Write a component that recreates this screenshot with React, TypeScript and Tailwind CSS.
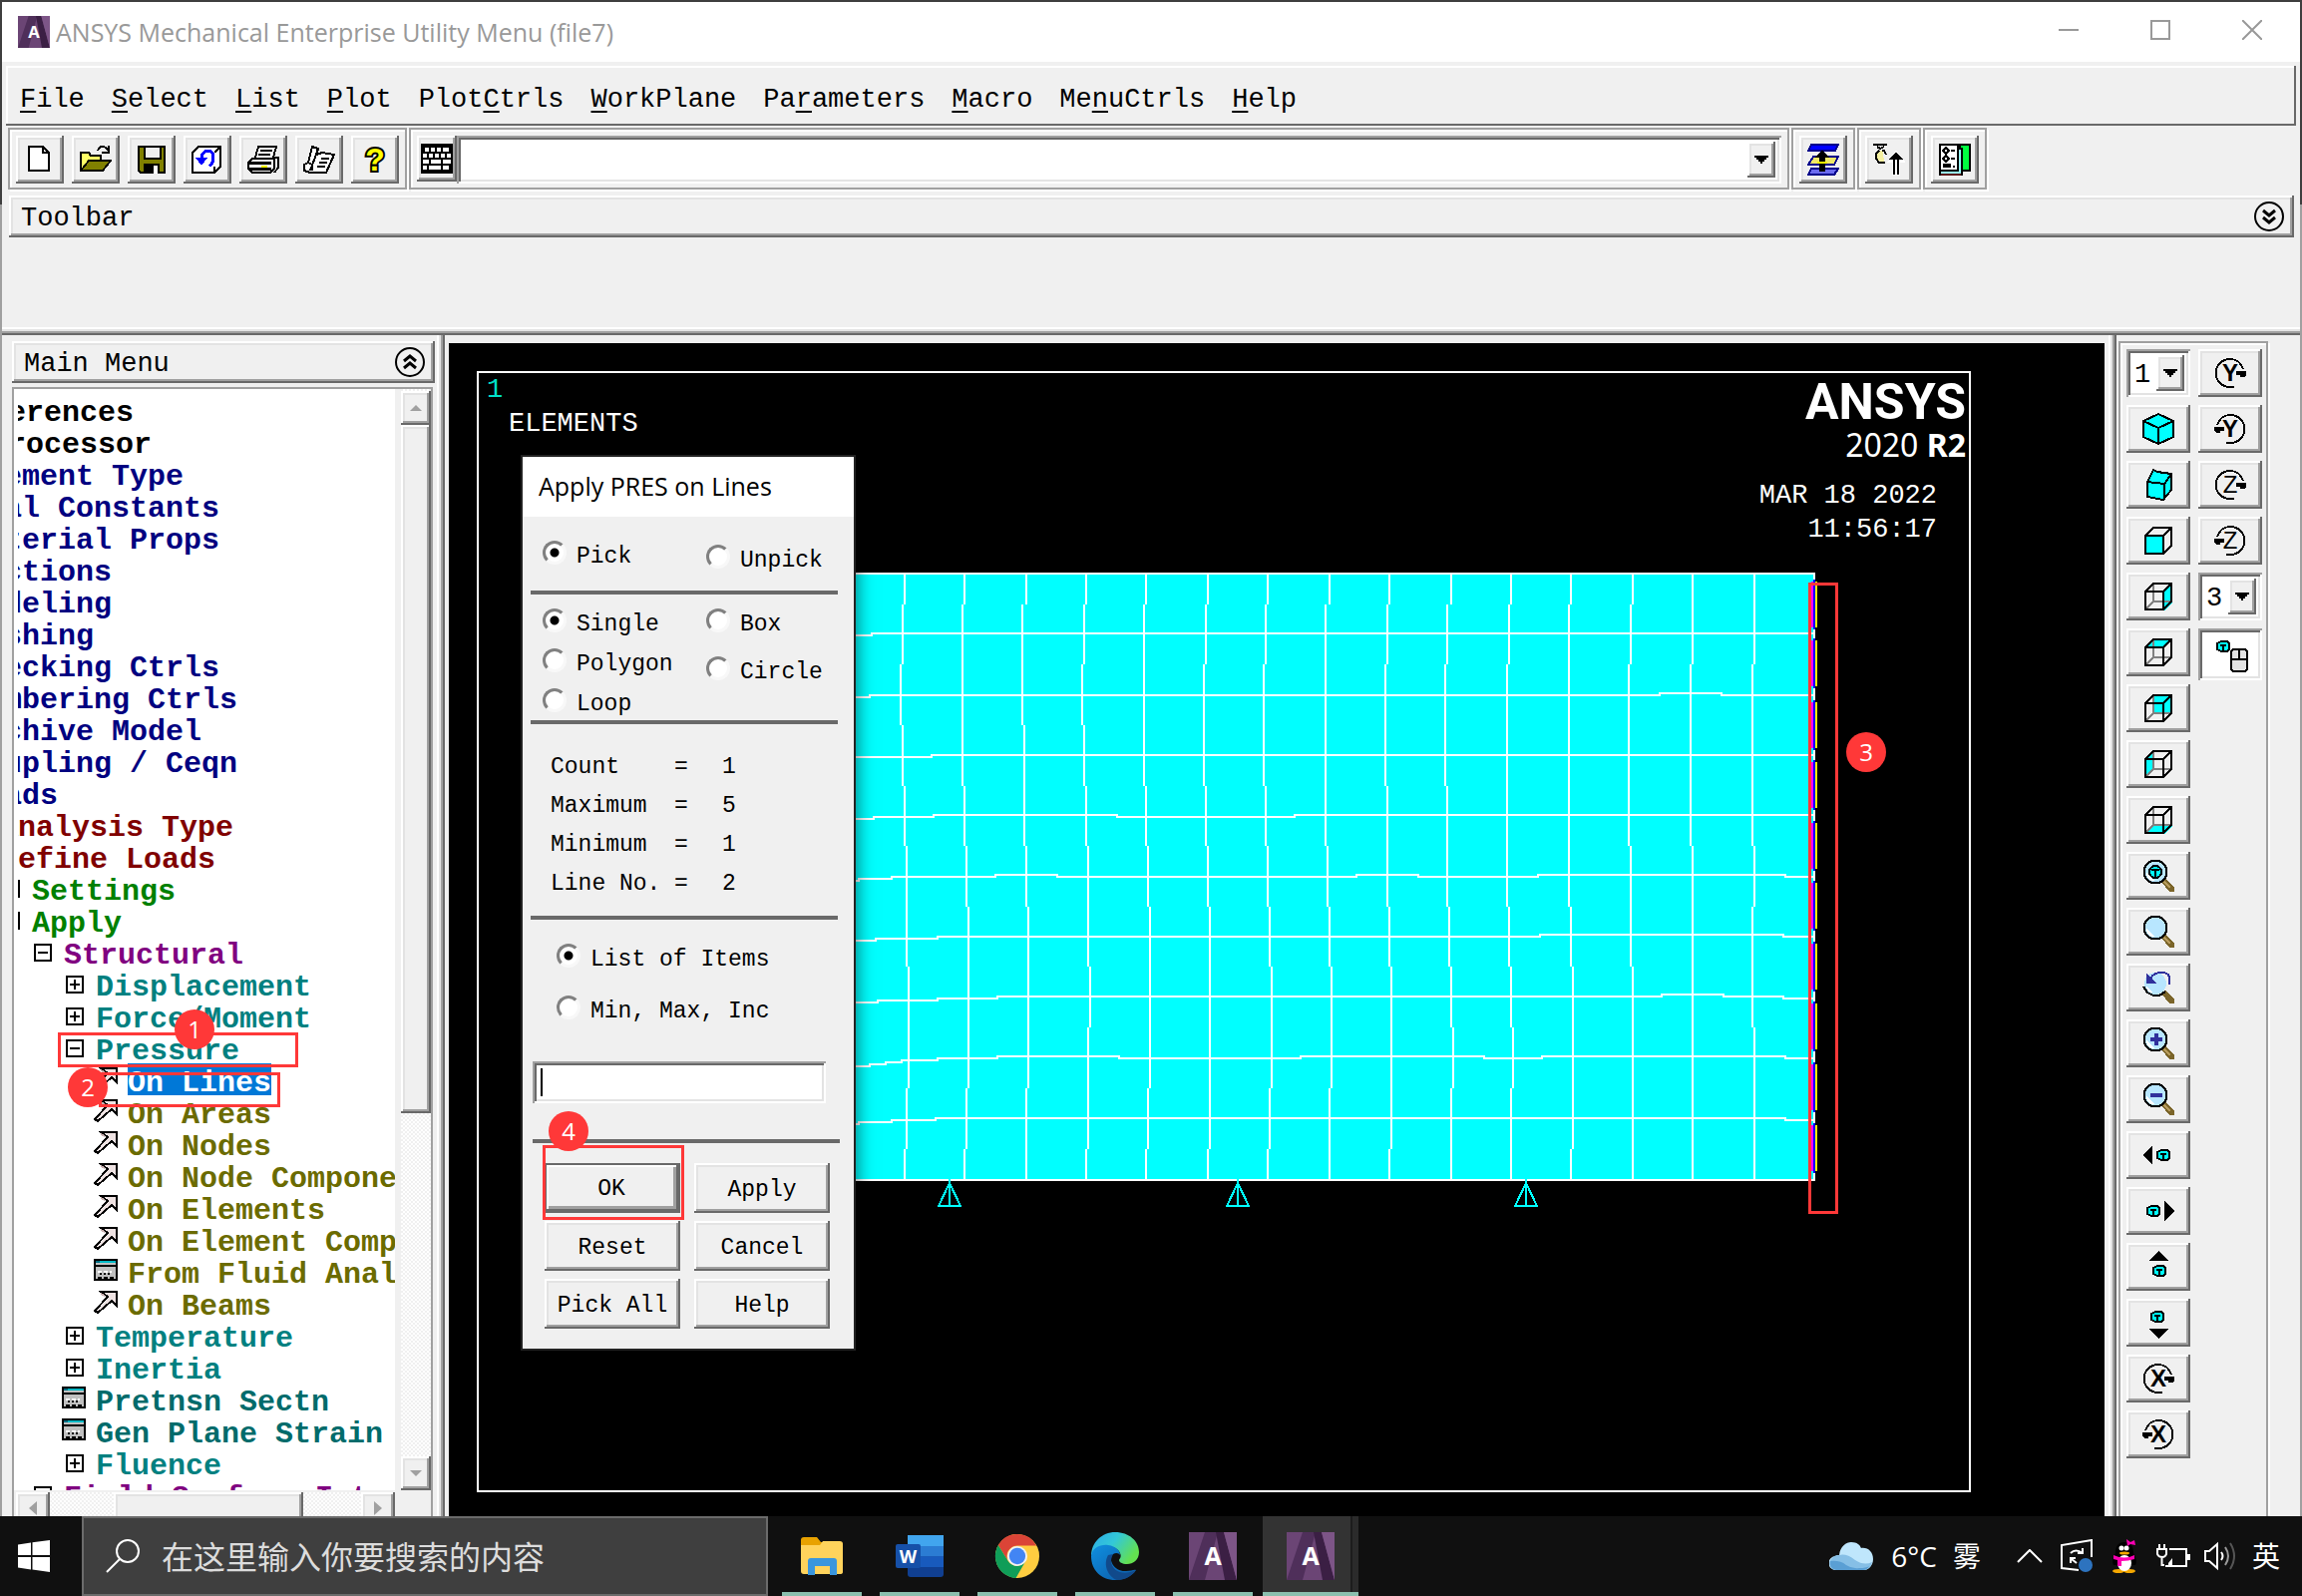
import type { ReactNode } from "react";

const RAISED =
  "bg-[#f0f0f0] shadow-[inset_-2px_-2px_0_#696969,inset_2px_2px_0_#fff,inset_-4px_-4px_0_#a0a0a0,inset_4px_4px_0_#e3e3e3]";
const SUNKEN =
  "bg-white shadow-[inset_2px_2px_0_#a0a0a0,inset_-2px_-2px_0_#fff,inset_4px_4px_0_#696969,inset_-4px_-4px_0_#e3e3e3]";
const GROUP =
  "border-2 border-[#a0a0a0] shadow-[inset_2px_2px_0_#fff,2px_2px_0_#fff] p-[6px] pb-1";
const MONO = "font-['Liberation_Mono',monospace]";
const SANS = "font-['Open_Sans','Noto_Sans_CJK_SC',sans-serif]";

/* ---------- shared pieces ---------- */

function Icon({ children, size = 16 }: { children: ReactNode; size?: number }) {
  return (
    <svg
      width={size * 2}
      height={size * 2}
      viewBox={`0 0 ${size} ${size}`}
      fill="none"
      stroke="#000"
      shapeRendering="crispEdges"
      aria-hidden="true"
    >
      {children}
    </svg>
  );
}

function ToolButton({ label, children }: { label: string; children: ReactNode }) {
  return (
    <button
      type="button"
      aria-label={label}
      className={`flex h-12 w-12 shrink-0 items-center justify-center ${RAISED}`}
    >
      {children}
    </button>
  );
}

function Arrow() {
  return (
    <svg width="14" height="8" viewBox="0 0 7 4" shapeRendering="crispEdges" aria-hidden="true">
      <path d="M0 0h7v1h-1v1h-1v1h-1v1h-1v-1h-1v-1h-1v-1h-1z" fill="#000" />
    </svg>
  );
}

function SplitterV() {
  return (
    <div className="flex w-2 shrink-0">
      <div className="w-0.5 bg-white" />
      <div className="w-0.5 bg-[#e3e3e3]" />
      <div className="w-0.5 bg-[#a0a0a0]" />
      <div className="w-0.5 bg-[#696969]" />
    </div>
  );
}

function SplitterH() {
  return (
    <div className="shrink-0">
      <div className="h-0.5 bg-white" />
      <div className="h-0.5 bg-[#e3e3e3]" />
      <div className="h-0.5 bg-[#a0a0a0]" />
      <div className="h-0.5 bg-[#696969]" />
    </div>
  );
}

function Chevrons({ up = false }: { up?: boolean }) {
  return (
    <svg width="30" height="30" viewBox="0 0 30 30" fill="none" stroke="#000" strokeWidth="2" aria-hidden="true">
      <circle cx="15" cy="15" r="14" />
      {up ? (
        <path d="M9 14l6-5 6 5M9 21l6-5 6 5" strokeWidth="3" />
      ) : (
        <path d="M9 9l6 5 6-5M9 16l6 5 6-5" strokeWidth="3" />
      )}
    </svg>
  );
}

function Badge({ n, className }: { n: number; className: string }) {
  return (
    <span
      className={`absolute flex h-10 w-10 items-center justify-center rounded-full bg-[#ff3838] text-2xl leading-6 text-white ${SANS} ${className}`}
    >
      {n}
    </span>
  );
}

function Outline({ className }: { className: string }) {
  return <span className={`absolute border-[3px] border-[#ff3838] ${className}`} />;
}

function AnsysLogo({ size }: { size: number }) {
  return (
    <svg width={size} height={size} viewBox="0 0 48 48" aria-hidden="true">
      <rect width="48" height="48" fill="#6b4575" />
      <path d="M0 48L16 0h13L16 48z" fill="#4f2f5a" />
      <path d="M27 0h8l13 48H36z" fill="#3b1f44" />
      <path d="M35 0h13v48z" fill="#7d5587" />
      <text
        x="24"
        y="33"
        textAnchor="middle"
        fontFamily="Open Sans"
        fontWeight="700"
        fontSize="25"
        fill="#fff"
      >
        A
      </text>
    </svg>
  );
}

/* ---------- title, menu, toolbars ---------- */

const menus = [
  ["", "F", "ile"],
  ["", "S", "elect"],
  ["", "L", "ist"],
  ["", "P", "lot"],
  ["Plot", "C", "trls"],
  ["", "W", "orkPlane"],
  ["Pa", "r", "ameters"],
  ["", "M", "acro"],
  ["Me", "n", "uCtrls"],
  ["", "H", "elp"],
];

const WINDOW_BUTTON = "flex h-[56px] w-[92px] items-center justify-center";

function TitleBar() {
  return (
    <header className="flex h-[60px] shrink-0 items-center bg-white pl-4">
      <div className="mr-1.5 flex">
        <AnsysLogo size={32} />
      </div>
      <h1 className={`text-[25px] leading-8 text-[#999] ${SANS}`}>
        ANSYS Mechanical Enterprise Utility Menu (file7)
      </h1>
      <div className="ml-auto mr-0.5 flex self-start">
        <button type="button" aria-label="Minimize" className={WINDOW_BUTTON}>
          <svg width="20" height="20" viewBox="0 0 20 20" stroke="#999" strokeWidth="2">
            <path d="M0 10h20" />
          </svg>
        </button>
        <button type="button" aria-label="Maximize" className={WINDOW_BUTTON}>
          <svg width="20" height="20" viewBox="0 0 20 20" fill="none" stroke="#999" strokeWidth="2">
            <rect x="1" y="1" width="18" height="18" />
          </svg>
        </button>
        <button type="button" aria-label="Close" className={WINDOW_BUTTON}>
          <svg width="20" height="20" viewBox="0 0 20 20" fill="none" stroke="#999" strokeWidth="2">
            <path d="M0 0l20 20M20 0L0 20" />
          </svg>
        </button>
      </div>
    </header>
  );
}

function MenuBar() {
  return (
    <nav
      className={`mx-1 mt-1 flex h-[60px] shrink-0 items-center gap-[27px] pl-3.5 pt-2 text-[27px] leading-8 shadow-[inset_-2px_-2px_0_#696969,inset_2px_2px_0_#fff] ${MONO}`}
    >
      {menus.map(([before, key, after]) => (
        <button type="button" key={before + key + after}>
          {before}
          <span className="underline decoration-2 underline-offset-4">{key}</span>
          {after}
        </button>
      ))}
    </nav>
  );
}

function StandardToolbar() {
  return (
    <div className="ml-1.5 mt-0.5 flex shrink-0 gap-0.5">
      <div className={`flex gap-2 ${GROUP}`}>
        <ToolButton label="New">
          <Icon>
            <path d="M2.5 1.5h7l3 3v9h-10z" fill="#fff" />
            <path d="M9.5 1.5v3h3" />
          </Icon>
        </ToolButton>
        <ToolButton label="Open">
          <Icon>
            <path d="M.5 13.5v-9h4l1 1.500h5v3" fill="#ffff66" />
            <path d="M.5 13.500l4-5h11l-4 5z" fill="#808000" />
            <path d="M9 3.500c1-3 4-2.500 5 0M14.500 1v3.500H11" />
          </Icon>
        </ToolButton>
        <ToolButton label="Save">
          <Icon>
            <path d="M1.500 1.500h13v13h-12l-1-1z" fill="#808000" />
            <rect x="4.500" y="1.500" width="8" height="6" fill="#f0f0f0" />
            <path d="M4 10h8v5H4z" fill="#000" stroke="none" />
            <path d="M9 11h2v4H9z" fill="#fff" stroke="none" />
          </Icon>
        </ToolButton>
        <ToolButton label="Resume">
          <Icon>
            <path d="M.5 4.500l3-3h11v10l-3 3H.5z" fill="#fff" />
            <path d="M11.500 14.500v-3M11.500 4.500l3-3" />
            <path d="M5 7.500c0-5 6-5 6-1 0 3-1 4-2 5" stroke="#00f" strokeWidth="1.500" />
            <path d="M2 7h6l-3 4z" fill="#00f" stroke="none" />
          </Icon>
        </ToolButton>
        <ToolButton label="Print">
          <Icon>
            <path d="M3.500 8.500l2-7h9l-2 7" fill="#fff" />
            <path d="M6.500 3.500h6M5.500 5.500h6M13 7h2.500v5l-2 2.500" />
            <path d="M.5 9.500l2-2h11v5l-2 2h-9l-2-2z" fill="#f0f0f0" />
            <path d="M.5 9.500h11.500M1 12.500h11" strokeWidth="1.500" />
            <path d="M7 11h3v1H7z" fill="#ff0" stroke="none" />
          </Icon>
        </ToolButton>
        <ToolButton label="Report">
          <Icon>
            <path d="M4.500 1.500l3 1-1 3 3-1 6 1-4 9h-8l-3-1v-3l2-1z" fill="#fff" />
            <path d="M6.500 5.500l-3 8M9 7.500h4M8 9.500h4M7 11.500h4M2.500 9.500l2 1v3" />
          </Icon>
        </ToolButton>
        <ToolButton label="Help">
          <svg width="32" height="32" viewBox="0 0 32 32" aria-hidden="true">
            <text
              x="16"
              y="27"
              textAnchor="middle"
              fontFamily="Liberation Sans"
              fontWeight="700"
              fontSize="32"
              fill="#ff0"
              stroke="#000"
              strokeWidth="4"
              paintOrder="stroke"
            >
              ?
            </text>
          </svg>
        </ToolButton>
      </div>

      <div className={`flex w-[1384px] ${GROUP}`}>
        <button
          type="button"
          aria-label="Command window"
          className={`flex h-[46px] w-10 shrink-0 items-center justify-center ${RAISED}`}
        >
          <svg width="32" height="30" viewBox="0 0 16 15" shapeRendering="crispEdges" aria-hidden="true">
            <path d="M0 0h16v15H0z" fill="#000" />
            <path
              d="M2 2h2v2H2zM5 2h2v2H5zM8 2h2v2H8zM11 2h3v2h-3zM1 5h2v2H1zM4 5h2v2H4zM7 5h2v2H7zM10 5h2v2h-2zM13 5h2v2h-2zM1 8h3v2H1zM5 8h5v2H5zM11 8h4v2h-4zM1 11h2v2H1zM4 11h6v2H4zM11 11h3v2h-3z"
              fill="#fff"
            />
          </svg>
        </button>
        <div className={`flex h-12 flex-1 items-center p-[6px] ${SUNKEN}`}>
          <input
            type="text"
            aria-label="Command"
            className={`h-full min-w-0 flex-1 text-[27px] outline-none ${MONO}`}
          />
          <button
            type="button"
            aria-label="Command history"
            className={`flex h-9 w-7 items-center justify-center ${RAISED}`}
          >
            <Arrow />
          </button>
        </div>
      </div>

      <div className={GROUP}>
        <ToolButton label="Raise hidden">
          <Icon>
            <path d="M2 .5h13.500l-1.500 3H.5z" fill="#00f" stroke="#00008b" />
            <path d="M3 6.500h12.500l-2 4H.5z" fill="#f0e868" stroke="#00008b" />
            <path d="M2 12.500h13.500l-2 3H.5z" fill="#6b6bf0" stroke="#00008b" />
            <path d="M7.500 3l3.500 4H9v7H6V7H4z" fill="#000" stroke="none" />
            <path d="M5 9.500h5" stroke="#ff0" />
          </Icon>
        </ToolButton>
      </div>
      <div className={GROUP}>
        <ToolButton label="Reset picking">
          <Icon>
            <path d="M2.500 3c-3 2-1 6 3 6.500L5 4z" fill="#f5f0a0" stroke="none" />
            <path d="M0 .5h7M2 1.500l1.500 1 2-1" />
            <path d="M3 3.500L1.500 5v2.500l1.500 2h3M4.500 3.500h1l1 2" />
            <path d="M11.500 4l4 5h-2.500v7h-3V9H8z" fill="#fff" stroke="#fff" />
            <path d="M11.500 4l3.500 4H8z" fill="#000" stroke="none" />
            <path d="M10.500 8v7.500M12.500 8v7.500" />
          </Icon>
        </ToolButton>
      </div>
      <div className={GROUP}>
        <ToolButton label="Contact manager">
          <Icon>
            <rect x="10.500" y=".5" width="5" height="13" fill="#00ff40" />
            <path d="M9.500 2.500h2v13H.5v-3" fill="#99ffff" />
            <rect x=".5" y=".5" width="9" height="13" fill="#fff" />
            <path d="M3.500 2l1.500 1.500L3.500 5 2 3.500zM3.500 6L5 7.500 3.500 9 2 7.500z" />
            <path d="M6 3.500h2M6 7.500h2M7 11.500h1" />
            <path d="M2 10h4v2H2z" fill="#000" stroke="none" />
            <path d="M1 15.500h10" stroke="#5a1010" />
          </Icon>
        </ToolButton>
      </div>
    </div>
  );
}

/* ---------- main menu tree ---------- */

type Kind = "none" | "plus" | "minus" | "pick" | "form";
type Row = { label: string; depth: number; kind: Kind; color: string; selected?: boolean };

const NAVY = "text-[#000080]";
const TEAL = "text-[#008080]";
const OLIVE = "text-[#6b6b00]";

const rows: Row[] = [
  { label: "Preferences", depth: 0, kind: "form", color: "text-black" },
  { label: "Preprocessor", depth: 0, kind: "minus", color: "text-black" },
  { label: "Element Type", depth: 1, kind: "plus", color: NAVY },
  { label: "Real Constants", depth: 1, kind: "plus", color: NAVY },
  { label: "Material Props", depth: 1, kind: "plus", color: NAVY },
  { label: "Sections", depth: 1, kind: "plus", color: NAVY },
  { label: "Modeling", depth: 1, kind: "plus", color: NAVY },
  { label: "Meshing", depth: 1, kind: "plus", color: NAVY },
  { label: "Checking Ctrls", depth: 1, kind: "plus", color: NAVY },
  { label: "Numbering Ctrls", depth: 1, kind: "plus", color: NAVY },
  { label: "Archive Model", depth: 1, kind: "plus", color: NAVY },
  { label: "Coupling / Ceqn", depth: 1, kind: "plus", color: NAVY },
  { label: "Loads", depth: 1, kind: "minus", color: NAVY },
  { label: "Analysis Type", depth: 2, kind: "plus", color: "text-[#800000]" },
  { label: "Define Loads", depth: 2, kind: "minus", color: "text-[#800000]" },
  { label: "Settings", depth: 3, kind: "plus", color: "text-[#008000]" },
  { label: "Apply", depth: 3, kind: "minus", color: "text-[#008000]" },
  { label: "Structural", depth: 4, kind: "minus", color: "text-[#800080]" },
  { label: "Displacement", depth: 5, kind: "plus", color: TEAL },
  { label: "Force/Moment", depth: 5, kind: "plus", color: TEAL },
  { label: "Pressure", depth: 5, kind: "minus", color: TEAL },
  { label: "On Lines", depth: 6, kind: "pick", color: "text-white", selected: true },
  { label: "On Areas", depth: 6, kind: "pick", color: OLIVE },
  { label: "On Nodes", depth: 6, kind: "pick", color: OLIVE },
  { label: "On Node Components", depth: 6, kind: "pick", color: OLIVE },
  { label: "On Elements", depth: 6, kind: "pick", color: OLIVE },
  { label: "On Element Components", depth: 6, kind: "pick", color: OLIVE },
  { label: "From Fluid Analy", depth: 6, kind: "form", color: OLIVE },
  { label: "On Beams", depth: 6, kind: "pick", color: OLIVE },
  { label: "Temperature", depth: 5, kind: "plus", color: TEAL },
  { label: "Inertia", depth: 5, kind: "plus", color: TEAL },
  { label: "Pretnsn Sectn", depth: 5, kind: "form", color: "text-[#006b6b]" },
  { label: "Gen Plane Strain", depth: 5, kind: "form", color: "text-[#006b6b]" },
  { label: "Fluence", depth: 5, kind: "plus", color: TEAL },
  { label: "Field Surface Intr", depth: 4, kind: "plus", color: "text-[#800080]" },
];

function TreeIcon({ kind }: { kind: Kind }) {
  if (kind === "plus" || kind === "minus") {
    return (
      <Icon size={12}>
        <rect x="2.500" y="2.500" width="8" height="8" fill="#fff" />
        <path d="M4 6.500h5" />
        {kind === "plus" && <path d="M6.500 4v5" />}
      </Icon>
    );
  }
  if (kind === "pick") {
    return (
      <Icon size={12}>
        <path d="M3.500 .5h8v7l-2.500-2.500-7 6-1.500-1 6.500-7z" fill="#efe3e3" />
        <path d="M3.500 1.500l2 1" stroke="#c9b0b0" />
      </Icon>
    );
  }
  if (kind === "form") {
    return (
      <Icon size={12}>
        <rect x=".5" y=".5" width="11" height="10" fill="#c0c0c0" />
        <path d="M1 1.500h10" stroke="#00b8c4" />
        <path d="M1 1.500h2" stroke="#006b80" />
        <path d="M1 3.500h10" />
        <path d="M2 6.500h2M5 6.500h2M8 6.500h1" stroke="#fff" />
        <path d="M3 7.500h1M5 7.500h1M7 7.500h1M2 9.500h2M5 9.500h2M8 9.500h2" />
      </Icon>
    );
  }
  return null;
}

const TRACK =
  "bg-[repeating-conic-gradient(#fff_0_25%,#f0f0f0_0_50%)] bg-[length:4px_4px]";

function MainMenu() {
  return (
    <aside className="relative flex w-[436px] shrink-0 flex-col overflow-hidden pl-2.5 pt-1.5">
      <div className={`flex h-[42px] w-[424px] shrink-0 items-center justify-between pl-3 pr-2.5 ${RAISED}`}>
        <h2 className={`pt-1 text-[27px] leading-8 ${MONO}`}>Main Menu</h2>
        <button type="button" aria-label="Collapse main menu">
          <Chevrons up />
        </button>
      </div>

      <div className="mt-1 flex min-h-0 w-[422px] flex-1 flex-col border-2 border-b-0 border-[#a0a0a0] bg-white">
        <div className="flex min-h-0 flex-1">
          <div className="ml-1 min-w-0 flex-1 overflow-hidden pt-1">
            <ul className={`-ml-[116px] text-[30px] font-bold ${MONO}`}>
              {rows.map((row) => (
                <li
                  key={row.label}
                  className="flex h-8 items-center whitespace-nowrap"
                  style={{ paddingLeft: row.depth * 32 }}
                >
                  <span className="mr-2.5 flex w-6 shrink-0">
                    <TreeIcon kind={row.kind} />
                  </span>
                  <a
                    href="#"
                    className={`block h-8 leading-10 ${row.color} ${row.selected ? "bg-[#0078d7]" : ""}`}
                  >
                    {row.label}
                  </a>
                </li>
              ))}
            </ul>
          </div>
          <div className="w-1.5 bg-[#f0f0f0]" />
          <div className={`flex w-[30px] flex-col ${TRACK}`}>
            <button
              type="button"
              aria-label="Scroll up"
              className={`mt-0.5 flex h-[34px] items-center justify-center ${RAISED}`}
            >
              <svg width="12" height="6" viewBox="0 0 12 6" fill="#a0a0a0">
                <path d="M0 6l6-6 6 6z" />
              </svg>
            </button>
            <div className={`h-[690px] ${RAISED}`} />
            <button
              type="button"
              aria-label="Scroll down"
              className={`mt-auto flex h-[34px] items-center justify-center ${RAISED}`}
            >
              <svg width="12" height="6" viewBox="0 0 12 6" fill="#a0a0a0">
                <path d="M0 0l6 6 6-6z" />
              </svg>
            </button>
          </div>
        </div>
        <div className="flex h-[26px] shrink-0 overflow-hidden border-t-2 border-[#f0f0f0] bg-[#f0f0f0] pl-0.5 pr-9">
          <button
            type="button"
            aria-label="Scroll left"
            className={`flex h-8 w-[34px] shrink-0 items-center justify-center ${RAISED}`}
          >
            <svg width="8" height="14" viewBox="0 0 8 14" fill="#a0a0a0">
              <path d="M8 0v14L0 7z" />
            </svg>
          </button>
          <div className={`h-8 w-16 shrink-0 ${TRACK}`} />
          <div className={`h-8 w-[190px] shrink-0 ${RAISED}`} />
          <div className={`h-8 flex-1 ${TRACK}`} />
          <button
            type="button"
            aria-label="Scroll right"
            className={`flex h-8 w-[34px] shrink-0 items-center justify-center ${RAISED}`}
          >
            <svg width="8" height="14" viewBox="0 0 8 14" fill="#a0a0a0">
              <path d="M0 0v14l8-7z" />
            </svg>
          </button>
        </div>
      </div>

      <Outline className="left-14 top-[699px] h-[35px] w-[241px]" />
      <Outline className="left-[97px] top-[739px] h-[35px] w-[182px]" />
      <Badge n={1} className="left-[173px] top-[676px]" />
      <Badge n={2} className="left-[66px] top-[734px]" />
    </aside>
  );
}

/* ---------- graphics window ---------- */

const levels = [576, 635, 697, 757, 818, 878, 939, 999, 1060, 1121, 1183];

// base x of each vertical mesh line, then its offset at every level
const columns: [number, number[]][] = [
  [907, [0, -1, -2, -1, 0, 1, 1, 2, 2, 1, 0]],
  [967, [0, -1, -1, -1, 0, 1, 2, 2, 2, 1, 0]],
  [1029, [0, -2, -2, -1, -1, 0, 1, 1, 1, 0, 0]],
  [1089, [0, -1, -2, -1, 0, 1, 1, 2, 1, 1, 0]],
  [1149, [0, -1, -1, -1, 0, 1, 2, 2, 2, 1, 0]],
  [1211, [0, -1, -2, -2, -1, 0, 1, 1, 1, 1, 0]],
  [1271, [0, -1, -2, -2, -1, 0, 1, 2, 2, 1, 0]],
  [1333, [0, -2, -2, -2, -2, -1, 0, 1, 1, 0, 0]],
  [1393, [0, -1, -2, -2, -1, -1, 0, 1, 1, 1, 0]],
  [1455, [0, -2, -3, -3, -2, -2, -1, 0, 1, 0, 0]],
  [1515, [0, -1, -2, -2, -2, -2, -1, 0, 1, 0, 0]],
  [1575, [0, -1, -1, -1, -1, -1, 0, 1, 1, 1, 0]],
  [1637, [0, -1, -2, -2, -2, -1, -1, 0, 0, 0, 0]],
  [1697, [0, 0, -1, -1, -1, 0, 0, 0, 0, 0, 0]],
  [1759, [0, 0, -1, -1, -1, 0, -1, -1, 0, 0, 0]],
];

function columnPath([x, offsets]: [number, number[]]) {
  let d = `M${x} ${levels[0]}`;
  for (let i = 1; i < levels.length; i++) {
    // each step jumps sideways halfway down the element, with no tick between
    const mid = Math.round((levels[i - 1] + levels[i]) / 2);
    d += `V${mid}M${x + offsets[i] * 2} ${mid}V${levels[i]}`;
  }
  return d;
}

const meshRows = [
  "M856 637H874V635H1819",
  "M856 699H872V697H1664V695H1726V697H1819",
  "M856 759H934V757H1819",
  "M856 821H876V819H936V817H1120V819H1298V817H1819",
  "M856 883H861V881H894V879H998V877H1060V879H1360V877H1422V879H1542V877H1790V879H1819",
  "M856 943H878V941H940V939H1544V937H1788V939H1819",
  "M856 1005H880V1003H940V1001H1000V999H1666V997H1728V999H1788V1001H1819",
  "M856 1069H872V1067H888V1065H904V1063H940V1061H1000V1059H1122V1061H1304V1059H1488V1061H1546V1059H1790V1061H1819",
  "M856 1127H861V1125H894V1123H938V1121H1790V1123H1819",
];

function Mesh() {
  return (
    <svg
      className="absolute left-0 top-0"
      width="1660"
      height="1176"
      viewBox="450 344 1660 1176"
      fill="none"
      shapeRendering="crispEdges"
      role="img"
      aria-label="Element plot"
    >
      <rect x="479" y="373" width="1496" height="1122" stroke="#fff" strokeWidth="2" />
      <rect x="600" y="575" width="1219" height="608" fill="#0ff" stroke="#fff" strokeWidth="2" />
      <g stroke="#fff" strokeWidth="2">
        {meshRows.map((d) => (
          <path key={d} d={d} />
        ))}
        {columns.map((c) => (
          <path key={c[0]} d={columnPath(c)} />
        ))}
      </g>
      {levels.slice(0, 10).map((y) => (
        <g key={y} strokeWidth="2">
          <path d={`M1817 ${y + 7}v46`} stroke="#f0f" />
          <path d={`M1819 ${y + 5}v50`} stroke="#00f" />
          <path d={`M1821 ${y + 7}v46`} stroke="#ff0" />
        </g>
      ))}
      {[952, 1241, 1530].map((x) => (
        <path
          key={x}
          d={`M${x} 1182v28M${x} 1186l-11 23h22z`}
          stroke="#0ff"
          strokeWidth="2"
        />
      ))}
    </svg>
  );
}

function RadioRow({
  name,
  label,
  checked = false,
}: {
  name: string;
  label: string;
  checked?: boolean;
}) {
  return (
    <label className="flex h-[30px] items-start gap-2.5">
      <input
        type="radio"
        name={name}
        defaultChecked={checked}
        className="h-6 w-6 shrink-0 appearance-none rounded-full border-[3px] border-t-[#808080] border-l-[#808080] border-r-[#f8f8f8] border-b-[#f8f8f8] bg-white checked:bg-[radial-gradient(circle,#000_4px,#fff_5px)]"
      />
      <span className="leading-8">{label}</span>
    </label>
  );
}

const counts = [
  ["Count", "1"],
  ["Maximum", "5"],
  ["Minimum", "1"],
  ["Line No.", "2"],
];

function Rule() {
  return <div className="ml-2 h-1 w-[308px] bg-[#696969]" />;
}

function PickDialog() {
  return (
    <section
      className={`absolute left-[72px] top-[112px] w-[336px] border-2 border-[#222] bg-[#f0f0f0] text-[23px] shadow-[0_4px_18px_rgba(0,0,0,0.6)] ${MONO}`}
    >
      <h2 className={`flex h-[60px] items-center bg-white pl-4 text-[25px] ${SANS}`}>
        Apply PRES on Lines
      </h2>
      <div className="flex h-[74px] pl-5 pt-6">
        <div className="w-[164px]">
          <RadioRow name="mode" label="Pick" checked />
        </div>
        <div className="pt-1">
          <RadioRow name="mode" label="Unpick" />
        </div>
      </div>
      <Rule />
      <div className="flex h-[126px] pl-5 pt-3.5">
        <div className="flex w-[164px] flex-col gap-2.5">
          <RadioRow name="shape" label="Single" checked />
          <RadioRow name="shape" label="Polygon" />
          <RadioRow name="shape" label="Loop" />
        </div>
        <div className="flex flex-col gap-[18px]">
          <RadioRow name="shape" label="Box" />
          <RadioRow name="shape" label="Circle" />
        </div>
      </div>
      <Rule />
      <dl className="pb-3 pl-7 pt-6">
        {counts.map(([name, value]) => (
          <div key={name} className="flex h-[39px] items-center">
            <dt className="w-[124px]">{name}</dt>
            <dd className="w-12">=</dd>
            <dd>{value}</dd>
          </div>
        ))}
      </dl>
      <Rule />
      <div className="flex flex-col gap-[22px] pl-[34px] pt-6">
        <RadioRow name="entry" label="List of Items" checked />
        <RadioRow name="entry" label="Min, Max, Inc" />
      </div>
      <div className={`mb-9 ml-2.5 mt-9 flex h-[42px] w-[294px] items-center p-1.5 ${SUNKEN}`}>
        <span className="ml-0.5 h-7 w-0.5 bg-black" />
        <input type="text" aria-label="Items" className="min-w-0 flex-1 outline-none" />
      </div>
      <div className="ml-0.5">
        <Rule />
      </div>
      <div className="grid grid-cols-[136px_136px] gap-x-3.5 gap-y-2 pb-5 pl-[22px] pt-5">
        <button
          type="button"
          className="h-[50px] border-2 border-b-4 border-r-4 border-[#696969] bg-[#f0f0f0] pt-1 shadow-[inset_2px_2px_0_#fff,inset_-3px_-3px_0_#a0a0a0]"
        >
          OK
        </button>
        {["Apply", "Reset", "Cancel", "Pick All", "Help"].map((label) => (
          <button type="button" key={label} className={`h-[50px] pt-1 ${RAISED}`}>
            {label}
          </button>
        ))}
      </div>
      <Outline className="left-5 top-[690px] h-[75px] w-[142px]" />
      <Badge n={4} className="left-[26px] top-[656px]" />
    </section>
  );
}

function GraphicsWindow() {
  return (
    <main className={`relative ml-1 mr-1 mt-2 min-w-0 flex-1 overflow-hidden bg-black text-white ${MONO}`}>
      <Mesh />
      <p className="absolute left-[38px] top-[31px] text-[27px] leading-8 text-[#00e0c8]">1</p>
      <p className="absolute left-[60px] top-[65px] text-[27px] leading-8">ELEMENTS</p>
      <div className="absolute left-[1240px] top-[34px] flex w-[281px] flex-col items-end">
        <p className="font-['Roboto',sans-serif] text-[50px] leading-[50px] font-bold">ANSYS</p>
        <p className="font-['Noto_Sans','Open_Sans',sans-serif] text-[32px] leading-9">
          2020 <b>R2</b>
        </p>
      </div>
      <div className="absolute left-[1240px] top-[136px] w-[252px] text-right text-[27px] leading-[34px]">
        <p>MAR 18 2022</p>
        <p>11:56:17</p>
      </div>
      <div className="text-black">
        <PickDialog />
      </div>
      <Outline className="left-[1363px] top-60 h-[633px] w-[30px]" />
      <Badge n={3} className="left-[1401px] top-[390px]" />
    </main>
  );
}

/* ---------- view controls ---------- */

function TinyCube({ x, y }: { x: number; y: number }) {
  return (
    <g transform={`translate(${x} ${y})`}>
      <path d="M2.500 .5h3l1 1v3l-1 1h-3l-2-1v-3z" fill="#0ff" />
      <path d="M2 2.500h3M3.500 2.500v3" />
    </g>
  );
}

const faces = {
  front: "M1 5h10v10H1z",
  right: "M11 5l4-4v10l-4 4z",
  top: "M1 5l4-4h10l-4 4z",
  back: "M5 1h10v9H5z",
  left: "M1 5l4-4v10l-4 4z",
  bottom: "M1 15l4-4h10l-4 4z",
};

function WireCube({ face }: { face: keyof typeof faces }) {
  return (
    <Icon>
      <path d={faces[face]} fill="#0ff" stroke="none" />
      {face !== "front" && <path d="M5.500 2v8.500M5 10.500h9M5 11l-4 4" stroke="#808080" />}
      <path d="M1.500 5.500h9v9h-9zM1.500 5.500l4-4h9v9l-4 4M10.500 5.500l4-4" />
    </Icon>
  );
}

function Rotate({ axis, ccw = false }: { axis: string; ccw?: boolean }) {
  return (
    <Icon>
      <g transform={ccw ? "translate(16 0) scale(-1 1)" : undefined}>
        <path d="M14.500 6C13.500 3 11 1 8 1 4 1 .8 4 .8 8s3 7 7.200 7h2" />
        <path d="M11 7h5v2l-1 1h-2v-1h-2z" fill="#000" stroke="none" />
      </g>
      <text
        x="8"
        y="12"
        textAnchor="middle"
        fontFamily="Liberation Sans"
        fontWeight={axis === "Z" ? 400 : 700}
        fontSize="12"
        fill="#000"
        stroke="none"
      >
        {axis}
      </text>
    </Icon>
  );
}

function Lens({ children }: { children?: ReactNode }) {
  return (
    <Icon>
      <path d="M9.500 11l2-1.500L16 13.500V16h-2.500z" fill="#7b652a" stroke="none" />
      <path d="M11 11l3 3" stroke="#b89c5c" />
      <circle cx="6.500" cy="6" r="5.700" fill="#b8e6ff" />
      <path d="M2 6l4 4.500C3.500 11 2 9 2 6z" fill="#fff" stroke="none" />
      {children}
    </Icon>
  );
}

const viewTools: { label: string; icon: ReactNode }[] = [
  {
    label: "Isometric view",
    icon: (
      <Icon>
        <path d="M8 .5l7.500 3.500v8L8 15.500.5 12V4z" fill="#0ff" />
        <path d="M.5 4L8 7.500 15.500 4M8 7.500v8" />
      </Icon>
    ),
  },
  {
    label: "Oblique view",
    icon: (
      <Icon>
        <path d="M2.500 6.500L5.500.5l2 1 7 1v8l-4 5-8-1.500z" fill="#0ff" />
        <path d="M2.500 6.500l8.500 1 3.500-5M11 7.500v8" />
      </Icon>
    ),
  },
  { label: "Front view", icon: <WireCube face="front" /> },
  { label: "Right view", icon: <WireCube face="right" /> },
  { label: "Top view", icon: <WireCube face="top" /> },
  { label: "Back view", icon: <WireCube face="back" /> },
  { label: "Left view", icon: <WireCube face="left" /> },
  { label: "Bottom view", icon: <WireCube face="bottom" /> },
  {
    label: "Fit view",
    icon: (
      <Lens>
        <circle cx="6.500" cy="6" r="3" fill="#0ff" />
        <path d="M4.500 5h4M6.500 5v4" />
      </Lens>
    ),
  },
  { label: "Zoom model", icon: <Lens /> },
  {
    label: "Back up zoom",
    icon: (
      <Icon>
        <path d="M9.500 11l2-1.500L16 13.500V16h-2.500z" fill="#7b652a" stroke="none" />
        <circle cx="6.500" cy="6" r="5.500" fill="#b8e6ff" stroke="none" />
        <path d="M2 7l3 3.500C3 11 2 9 2 7z" fill="#fff" stroke="none" />
        <path d="M.5 7.500l2 3 3 1.500h3l3-2" />
        <path d="M4 3.500c2-4 10-4 9.500 0v3" stroke="#30309c" />
        <path d="M2 1v5h5z" fill="#30309c" stroke="none" />
      </Icon>
    ),
  },
  {
    label: "Zoom in",
    icon: (
      <Lens>
        <path d="M4 6h6M7 3v6" stroke="#30309c" strokeWidth="2" />
      </Lens>
    ),
  },
  {
    label: "Zoom out",
    icon: (
      <Lens>
        <path d="M4 6h6" stroke="#30309c" strokeWidth="2" />
      </Lens>
    ),
  },
  {
    label: "Pan left",
    icon: (
      <Icon>
        <path d="M5 3v10L0 8z" fill="#000" stroke="none" />
        <TinyCube x={7} y={5} />
      </Icon>
    ),
  },
  {
    label: "Pan right",
    icon: (
      <Icon>
        <path d="M11 3v10l5-5z" fill="#000" stroke="none" />
        <TinyCube x={2} y={5} />
      </Icon>
    ),
  },
  {
    label: "Pan up",
    icon: (
      <Icon>
        <path d="M3 5h10L8 0z" fill="#000" stroke="none" />
        <TinyCube x={5} y={7} />
      </Icon>
    ),
  },
  {
    label: "Pan down",
    icon: (
      <Icon>
        <path d="M3 11h10l-5 5z" fill="#000" stroke="none" />
        <TinyCube x={4} y={2} />
      </Icon>
    ),
  },
  { label: "Rotate X", icon: <Rotate axis="X" /> },
  { label: "Rotate X back", icon: <Rotate axis="X" ccw /> },
];

function ViewButton({ label, children }: { label: string; children: ReactNode }) {
  return (
    <button
      type="button"
      aria-label={label}
      className={`flex h-12 w-16 items-center justify-center ${RAISED}`}
    >
      {children}
    </button>
  );
}

function ViewSelect({ label, value }: { label: string; value: string }) {
  return (
    <div className={`relative h-12 w-16 p-1.5 ${SUNKEN}`}>
      <select
        aria-label={label}
        defaultValue={value}
        className={`h-full w-full appearance-none bg-white pl-0.5 pt-1 text-[27px] leading-8 outline-none ${MONO}`}
      >
        {["1", "2", "3", "4", "5"].map((v) => (
          <option key={v}>{v}</option>
        ))}
      </select>
      <span
        className={`pointer-events-none absolute right-1.5 top-1.5 flex h-9 w-7 items-center justify-center ${RAISED}`}
      >
        <Arrow />
      </span>
    </div>
  );
}

function ViewControls() {
  return (
    <aside className="w-[184px] shrink-0 overflow-hidden pl-0.5 pt-1.5">
      <div className={`flex h-[1200px] w-[150px] items-start gap-2 ${GROUP}`}>
        <div className="flex flex-col gap-2">
          <ViewSelect label="Window" value="1" />
          {viewTools.map((tool) => (
            <ViewButton key={tool.label} label={tool.label}>
              {tool.icon}
            </ViewButton>
          ))}
        </div>
        <div className="flex flex-col gap-2">
          <ViewButton label="Rotate Y">
            <Rotate axis="Y" />
          </ViewButton>
          <ViewButton label="Rotate Y back">
            <Rotate axis="Y" ccw />
          </ViewButton>
          <ViewButton label="Rotate Z">
            <Rotate axis="Z" />
          </ViewButton>
          <ViewButton label="Rotate Z back">
            <Rotate axis="Z" ccw />
          </ViewButton>
          <ViewSelect label="Rate" value="3" />
          <button
            type="button"
            aria-label="Dynamic model mode"
            className={`flex h-[52px] w-16 items-center justify-center ${SUNKEN}`}
          >
            <Icon size={18}>
              <TinyCube x={2} y={2} />
              <path d="M9.500 7.500l1-1h6l1 1v9l-1 1h-6l-1-1z" fill="#e3e3e3" />
              <path d="M9 11.500h8M13.500 6.500v5" />
            </Icon>
          </button>
        </div>
      </div>
    </aside>
  );
}

/* ---------- taskbar ---------- */

function Explorer() {
  return (
    <svg width="44" height="38" viewBox="0 0 44 38" aria-hidden="true">
      <path d="M1 3q0-3 3-3h13l4 5h19q3 0 3 3v10H1z" fill="#e8a200" />
      <path d="M1 8h19l3-4h17q3 0 3 3v28q0 2-3 2H4q-3 0-3-3z" fill="#ffd35c" />
      <path d="M8 38V24q0-3 3-3h23q3 0 3 3v14h-7v-9H15v9z" fill="#3a96dd" />
    </svg>
  );
}

function Word() {
  return (
    <svg width="48" height="42" viewBox="0 0 48 42" aria-hidden="true">
      <rect x="12" width="36" height="42" rx="3" fill="#103f91" />
      <path d="M12 0h36v11H12z" fill="#41a5ee" />
      <path d="M12 11h36v10.500H12z" fill="#2b7cd3" />
      <path d="M12 21.500h36V32H12z" fill="#185abd" />
      <rect y="9" width="25" height="24" rx="2" fill="#1650a8" />
      <text x="12.500" y="28" textAnchor="middle" fontFamily="Open Sans" fontWeight="700" fontSize="18" fill="#fff">
        W
      </text>
    </svg>
  );
}

function Chrome() {
  return (
    <svg width="46" height="46" viewBox="0 0 48 48" aria-hidden="true">
      <circle cx="24" cy="24" r="23" fill="#ffcd40" />
      <path d="M4 12.500A23 23 0 0 1 44 13H24a11 11 0 0 0-9.500 16.500z" fill="#db4437" />
      <path d="M4 12.500A23 23 0 0 0 22.500 47l10-17.500a11 11 0 0 1-18 0z" fill="#0f9d58" />
      <circle cx="24" cy="24" r="10.500" fill="#f1f1f1" />
      <circle cx="24" cy="24" r="8.500" fill="#4285f4" />
    </svg>
  );
}

function Edge() {
  return (
    <svg width="48" height="48" viewBox="0 0 48 48" aria-hidden="true">
      <defs>
        <linearGradient id="edge-top" x1="0" y1="0" x2="1" y2="0.500">
          <stop offset="0" stopColor="#2ba8e8" />
          <stop offset="0.500" stopColor="#33c8d8" />
          <stop offset="1" stopColor="#63e050" />
        </linearGradient>
        <linearGradient id="edge-body" x1="0" y1="0" x2="1" y2="1">
          <stop offset="0" stopColor="#0f8fe0" />
          <stop offset="1" stopColor="#0c59a4" />
        </linearGradient>
      </defs>
      <path d="M0 24C0 10 11 0 24 0c14 0 24 9 24 20 0 8-6 12-12 12-5 0-8-2-8-4 0-1 3-3 1-7-2-5-8-7-13-6C8 16 2 19 0 24z" fill="url(#edge-top)" />
      <path d="M0 24c1-9 10-12 17-11 8 1 12 6 12 10-1-2-4-3-7-1-6 6 2 18 13 17 5 0 8-2 10-1C40 45 32 48 24 48 10 48 0 38 0 24z" fill="url(#edge-body)" />
      <path d="M17 23c-5 9-1 21 9 25 8 0 15-4 19-10-12 6-24 2-25-9 0-3 1-5 2-7z" fill="#114a8b" />
    </svg>
  );
}

const apps = [
  { name: "File Explorer", icon: <Explorer /> },
  { name: "Word", icon: <Word /> },
  { name: "Chrome", icon: <Chrome /> },
  { name: "Edge", icon: <Edge /> },
  { name: "ANSYS Launcher", icon: <AnsysLogo size={48} /> },
];

function Taskbar() {
  return (
    <footer className={`flex h-20 shrink-0 bg-[#101010] text-white ${SANS}`}>
      <button type="button" aria-label="Start" className="flex w-[82px] shrink-0 items-center pl-[18px]">
        <svg width="32" height="32" viewBox="0 0 32 32" fill="#fff" aria-hidden="true">
          <path d="M0 4.500L13 2.500V15H0zM14.500 2.300L32 0v15H14.500zM0 17h13v12.500L0 27.500zM14.500 17H32v15l-17.500-2.500z" />
        </svg>
      </button>
      <label className="flex w-[688px] shrink-0 items-center border-2 border-[#6b6b6b] bg-[#3f3f3f] pl-[22px]">
        <svg width="34" height="34" viewBox="0 0 34 34" fill="none" stroke="#fff" strokeWidth="2" aria-hidden="true">
          <circle cx="22" cy="12" r="11" />
          <path d="M14 20L1 33" />
        </svg>
        <input
          type="text"
          placeholder="在这里输入你要搜索的内容"
          className="ml-[22px] w-[500px] pt-0.5 text-[32px] leading-10 outline-none placeholder:text-[#dcdcdc]"
        />
      </label>
      <div className="ml-3.5 flex gap-[18px]">
        {apps.map((app) => (
          <button
            type="button"
            key={app.name}
            aria-label={app.name}
            className="flex w-20 items-center justify-center border-b-4 border-[#8abfae] pt-1"
          >
            {app.icon}
          </button>
        ))}
      </div>
      <button
        type="button"
        aria-label="ANSYS Mechanical"
        className="ml-2.5 flex w-24 items-center border-b-4 border-[#8abfae] bg-[linear-gradient(90deg,#333_88px,#1c1c1c_88px,#1c1c1c_90px,#2b2b2b_90px)] pl-6 pt-1"
      >
        <AnsysLogo size={48} />
      </button>

      <div className="ml-auto flex items-center pr-[22px] text-[28px] leading-10">
        <svg width="44" height="28" viewBox="0 0 44 28" aria-hidden="true">
          <path d="M7 28a7 7 0 0 1-1-14q1-1 4-1C11 4 17 0 22 0c6 0 9 3 10 6 7-1 12 4 12 11 0 6-4 11-10 11z" fill="#bfe6fc" />
          <path d="M10 13q7-2 16 5 9 6 17 2c-1 5-4 8-9 8H7C0 28-2 20 3 16q2-3 7-3z" fill="#86bfe6" />
          <path d="M1 19q10-1 16 4 6 4 13 3 7 0 10-2-2 4-6 4H7q-7-1-6-9z" fill="#5a9fd4" />
        </svg>
        <span className="ml-[18px] whitespace-pre">6°C</span>
        <span className="ml-4">雾</span>
        <svg className="ml-9" width="26" height="14" viewBox="0 0 26 14" fill="none" stroke="#fff" strokeWidth="2" aria-hidden="true">
          <path d="M1 13L13 1l12 12" />
        </svg>
        <svg className="ml-[18px]" width="34" height="34" viewBox="0 0 34 34" fill="none" stroke="#fff" strokeWidth="2" aria-hidden="true">
          <path d="M31 18V1L1 6v23l17 2" />
          <path d="M10 14q5-5 12 0M22 9v5h-5M10 24v-5h5M11 20l5 4" />
          <circle cx="25" cy="26" r="7" fill="#2d73bf" stroke="none" />
        </svg>
        <svg className="ml-[18px]" width="24" height="34" viewBox="0 0 24 34" aria-hidden="true">
          <ellipse cx="6" cy="32" rx="6" ry="2" fill="#f5a800" />
          <ellipse cx="17" cy="32" rx="6" ry="2" fill="#f5a800" />
          <path d="M12 3c7 0 9 5 9 11 2 3 4 8 2 12H1c-2-4 0-9 2-12 0-6 2-11 9-11z" fill="#000" />
          <ellipse cx="12" cy="24" rx="7" ry="8" fill="#fff" />
          <circle cx="9" cy="9" r="2.500" fill="#fff" />
          <circle cx="14" cy="9" r="2.500" fill="#fff" />
          <ellipse cx="12" cy="14" rx="5" ry="1.500" fill="#f5a800" />
          <path d="M1 16q11 5 21 0v4q-6 2-13 2v5H5v-6l-4-1z" fill="#ff00b4" />
          <path d="M14 0l4 3 4-2 1 5-5-1-3 2z" fill="#ff00b4" />
        </svg>
        <svg className="ml-5" width="34" height="24" viewBox="0 0 34 24" fill="none" stroke="#fff" strokeWidth="2" aria-hidden="true">
          <path d="M3 0v5M8 0v5M1 5h9v5q-1 3-4 3-4 0-5-3zM5.500 13v8H8" />
          <path d="M13 5h17v17H9" />
          <path d="M12 22v-3l4-5v8zM31 10h3v6h-3z" fill="#fff" stroke="none" />
        </svg>
        <svg className="ml-3.5" width="34" height="30" viewBox="0 0 34 30" fill="none" stroke="#fff" strokeWidth="2" aria-hidden="true">
          <path d="M1 10h4l8-7v24l-8-7H1z" />
          <path d="M17 11q3 4 0 8" />
          <path d="M21 6q6 9 0 18" stroke="#999" />
          <path d="M26 2q8 13 0 26" stroke="#555" />
        </svg>
        <span className="ml-3.5">英</span>
      </div>
    </footer>
  );
}

export default function App() {
  return (
    <div className="flex h-screen flex-col overflow-hidden bg-black text-black">
      <div className="flex min-h-0 flex-1 flex-col bg-[linear-gradient(#3f3f3f_205px,#a0a0a0_205px)] px-0.5 pt-0.5">
        <div className="flex min-h-0 flex-1 flex-col bg-[#f0f0f0]">
          <TitleBar />
          <MenuBar />
          <StandardToolbar />
          <div className={`ml-[7px] mr-1.5 mt-1.5 flex h-[42px] shrink-0 items-center justify-between pl-3 pr-2.5 ${RAISED}`}>
            <h2 className={`pt-1 text-[27px] leading-8 ${MONO}`}>Toolbar</h2>
            <button type="button" aria-label="Expand toolbar">
              <Chevrons />
            </button>
          </div>
          <div className="h-[90px] shrink-0" />
          <SplitterH />
          <div className="flex min-h-0 flex-1">
            <MainMenu />
            <SplitterV />
            <GraphicsWindow />
            <SplitterV />
            <ViewControls />
          </div>
        </div>
      </div>
      <Taskbar />
    </div>
  );
}
